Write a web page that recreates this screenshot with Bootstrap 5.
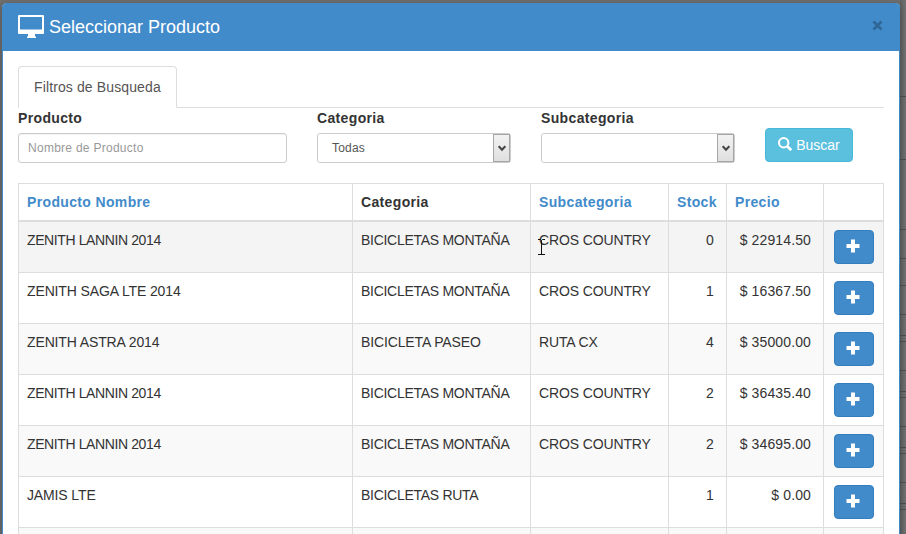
<!DOCTYPE html>
<html lang="es">
<head>
<meta charset="utf-8">
<meta name="viewport" content="width=device-width, initial-scale=1">
<title>Seleccionar Producto</title>
<link href="https://cdn.jsdelivr.net/npm/bootstrap@5.3.0/dist/css/bootstrap.min.css" rel="stylesheet">
<style>
body{background:#6b6b6b;font:14px/20px "Liberation Sans",Arial,sans-serif;color:#333;height:534px}
.page-back{height:534px;padding:3px 6px 0 2px;
 background:linear-gradient(90deg,#707070 0 900px,#626262 900px,#747474 906px)}
.page-rules{position:absolute;left:900px;top:0;width:6px;height:534px}
.dialog-box{position:relative;height:560px;background:#fff;border:1px solid #428bca;border-radius:4px 4px 0 0;box-shadow:0 2px 8px rgba(0,0,0,.3)}
.dialog-head{height:47px;background:#428bca;color:#fff;padding:0 15px 1px;border-radius:2px 2px 0 0}
.dialog-title{font-size:18px;line-height:20px;margin-left:5px}
.dialog-body{padding:15px}
.close-x{color:#2f6695;width:12px;height:12px;margin-bottom:4px}
.nav-tabs{border-color:#ddd;height:42px}
.nav-tabs .nav-link{padding:10px 15px;line-height:20px;border-radius:4px 4px 0 0;height:42px}
.nav-tabs .nav-link.active{color:#555;border-color:#ddd #ddd #fff}
.tab-text{letter-spacing:.12px}
.filters{height:75px;gap:30px}
.filters label{font-weight:700;line-height:20px;height:25px;display:block}
.bold-text{letter-spacing:.35px}
.filters .form-control{height:30px;font-size:12px;line-height:18px;padding:5px 10px 5px 9px;border:1px solid #ccc;border-radius:3px;box-shadow:inset 0 1px 1px rgba(0,0,0,.06);letter-spacing:.27px}
.filters .form-control::placeholder{color:#999}
.w-name{width:269px}.w-cat{width:194px}
.w-sub{margin-left:0}
.picker{height:30px;border:1px solid #ccc;border-radius:3px;font-size:12px;color:#555;padding-left:14px;letter-spacing:.2px}
.picker-arrow{width:17px;height:28px;border:1px solid #a6a6a6;background:linear-gradient(#f2f2f2,#dfdfdf)}
.btn-find{width:88px;height:34px;margin-top:20px;padding:0;font-size:14px;line-height:20px;border-radius:4px;color:#fff;background:#5bc0de;border:1px solid #46b8da}
.btn-find svg{margin-bottom:2px}
.btn-find:hover{color:#fff;background:#39b3d7}
.grid-table{table-layout:fixed;width:866px;border-collapse:separate;border-spacing:0;border-left:1px solid #ddd;border-top:1px solid #ddd;color:#333;margin:0}
.grid-table th,.grid-table td{border-right:1px solid #ddd;border-bottom:1px solid #ddd;padding:8px;line-height:20px;vertical-align:top;white-space:nowrap}
.grid-table th{height:38px;border-bottom-width:2px}
.grid-table td{height:51px;letter-spacing:-.13px}
.grid-table td.tight{letter-spacing:-.39px}
.grid-table td.snug{letter-spacing:-.28px}
.grid-table tbody tr:nth-child(odd) td{background:#f9f9f9}
.grid-table tbody tr:first-child td{background:#f4f4f4}
.grid-table a{color:#428bca;text-decoration:none}
.grid-table td.num{text-align:right;padding-right:12px;letter-spacing:.13px}
.grid-table td.act{padding-left:10px}
.btn-add{width:40px;height:34px;padding:0 2px 2px 0;border-radius:4px;background:#428bca;border:1px solid #357ebd;color:#fff}
.text-cursor{position:absolute;left:538px;top:239px;width:8px;height:16px}
svg{display:block}
</style>
</head>
<body>
<main class="page-back overflow-hidden position-relative">
<svg class="page-rules" viewBox="0 0 6 534" stroke="#505050"><path d="M0 96.500h6M0 159.500h6M0 229.500h6M0 258.500h6M0 285.500h6M0 314.500h6M0 335.500h6M0 341.500h6M0 370.500h6M0 391.500h6M0 397.500h6M0 426.500h6M0 447.500h6M0 453.500h6M0 482.500h6M0 503.500h6M0 509.500h6"/></svg>
<section class="dialog-box">
<header class="dialog-head d-flex align-items-center">
<svg width="26" height="24" viewBox="0 0 26 24" fill="#fff"><path fill-rule="evenodd" d="M1 0h24q1 0 1 1v17q0 1-1 1h-8v2.500h1V23H9v-1.500h1V19H1q-1 0-1-1V1q0-1 1-1zm1 2v12.500h22V2z"/></svg>
<h4 class="dialog-title mb-0 fw-normal">Seleccionar Producto</h4>
<button class="close-x btn p-0 border-0 ms-auto" aria-label="Cerrar"><svg width="11" height="11" viewBox="0 0 11 11" stroke="currentColor" stroke-width="2.600"><path d="M1.500 1.500l8 8M9.500 1.500l-8 8"/></svg></button>
</header>
<div class="dialog-body">
<ul class="nav nav-tabs"><li class="nav-item"><a class="nav-link active tab-text" href="#">Filtros de Busqueda</a></li></ul>
<form class="filters d-flex align-items-start">
<div class="w-name"><label class="bold-text" for="prod">Producto</label><input id="prod" class="form-control" placeholder="Nombre de Producto"></div>
<div class="w-cat"><label class="bold-text">Categoria</label><div class="picker d-flex align-items-center justify-content-between" role="combobox"><span>Todas</span><span class="picker-arrow d-flex align-items-center justify-content-center"><svg width="8" height="7" viewBox="0 0 8 7" fill="none" stroke="#444" stroke-width="2"><path d="M.7 1.200L4 4.700l3.300-3.500"/></svg></span></div></div>
<div class="w-cat"><label class="bold-text">Subcategoria</label><div class="picker d-flex align-items-center justify-content-end" role="combobox"><span class="picker-arrow d-flex align-items-center justify-content-center"><svg width="8" height="7" viewBox="0 0 8 7" fill="none" stroke="#444" stroke-width="2"><path d="M.7 1.200L4 4.700l3.300-3.500"/></svg></span></div></div>
<button type="button" class="btn btn-find d-flex align-items-center justify-content-center gap-1"><svg width="14" height="14" viewBox="0 0 14 14" fill="none" stroke="#fff"><circle cx="5.700" cy="5.700" r="4.700" stroke-width="2"/><path d="M9 9l4.200 4.200" stroke-width="2.700"/></svg><span>Buscar</span></button>
</form>
<table class="grid-table">
<colgroup><col style="width:334px"><col style="width:178px"><col style="width:138px"><col style="width:58px"><col style="width:97px"><col style="width:60px"></colgroup>
<thead><tr class="bold-text"><th><a href="#">Producto Nombre</a></th><th>Categoria</th><th><a href="#">Subcategoria</a></th><th><a href="#">Stock</a></th><th><a href="#">Precio</a></th><th></th></tr></thead>
<tbody>
<tr><td class="tight">ZENITH LANNIN 2014</td><td class="snug">BICICLETAS MONTAÑA</td><td>CROS COUNTRY</td><td class="num">0</td><td class="num">$ 22914.50</td><td class="act"><button class="btn btn-add d-flex align-items-center justify-content-center" aria-label="Agregar"><svg width="14" height="14" viewBox="0 0 14 14" fill="#fff"><path d="M5 .5h4V5h4.500v4H9v4.500H5V9H.5V5H5z"/></svg></button></td></tr>
<tr><td>ZENITH SAGA LTE 2014</td><td class="snug">BICICLETAS MONTAÑA</td><td>CROS COUNTRY</td><td class="num">1</td><td class="num">$ 16367.50</td><td class="act"><button class="btn btn-add d-flex align-items-center justify-content-center" aria-label="Agregar"><svg width="14" height="14" viewBox="0 0 14 14" fill="#fff"><path d="M5 .5h4V5h4.500v4H9v4.500H5V9H.5V5H5z"/></svg></button></td></tr>
<tr><td>ZENITH ASTRA 2014</td><td>BICICLETA PASEO</td><td>RUTA CX</td><td class="num">4</td><td class="num">$ 35000.00</td><td class="act"><button class="btn btn-add d-flex align-items-center justify-content-center" aria-label="Agregar"><svg width="14" height="14" viewBox="0 0 14 14" fill="#fff"><path d="M5 .5h4V5h4.500v4H9v4.500H5V9H.5V5H5z"/></svg></button></td></tr>
<tr><td class="tight">ZENITH LANNIN 2014</td><td class="snug">BICICLETAS MONTAÑA</td><td>CROS COUNTRY</td><td class="num">2</td><td class="num">$ 36435.40</td><td class="act"><button class="btn btn-add d-flex align-items-center justify-content-center" aria-label="Agregar"><svg width="14" height="14" viewBox="0 0 14 14" fill="#fff"><path d="M5 .5h4V5h4.500v4H9v4.500H5V9H.5V5H5z"/></svg></button></td></tr>
<tr><td class="tight">ZENITH LANNIN 2014</td><td class="snug">BICICLETAS MONTAÑA</td><td>CROS COUNTRY</td><td class="num">2</td><td class="num">$ 34695.00</td><td class="act"><button class="btn btn-add d-flex align-items-center justify-content-center" aria-label="Agregar"><svg width="14" height="14" viewBox="0 0 14 14" fill="#fff"><path d="M5 .5h4V5h4.500v4H9v4.500H5V9H.5V5H5z"/></svg></button></td></tr>
<tr><td>JAMIS LTE</td><td class="snug">BICICLETAS RUTA</td><td></td><td class="num">1</td><td class="num">$ 0.00</td><td class="act"><button class="btn btn-add d-flex align-items-center justify-content-center" aria-label="Agregar"><svg width="14" height="14" viewBox="0 0 14 14" fill="#fff"><path d="M5 .5h4V5h4.500v4H9v4.500H5V9H.5V5H5z"/></svg></button></td></tr>
<tr><td></td><td></td><td></td><td></td><td></td><td></td></tr>
</tbody>
</table>
</div>
</section>
<svg class="text-cursor" viewBox="0 0 8 16" fill="none" stroke="#111"><path d="M0 .5h2.500l1 1 1-1H7M3.500 1.500v14M0 15.500h7"/></svg>
</main>
<script src="https://cdn.jsdelivr.net/npm/bootstrap@5.3.0/dist/js/bootstrap.bundle.min.js"></script>
</body>
</html>
